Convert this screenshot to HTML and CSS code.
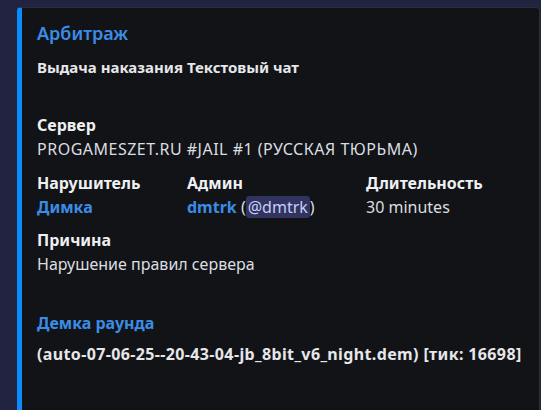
FILE: index.html
```html
<!DOCTYPE html>
<html lang="ru">
<head>
  <meta charset="UTF-8">
  <title>Арбитраж</title>
  <link rel="stylesheet" href="styles.css">
</head>
<body>

  <div class="embed">
    <div class="embed-title">Арбитраж</div>
    <div class="embed-desc">Выдача наказания Текстовый чат</div>

    <div class="fields">
      <div class="field full">
        <div class="field-name">Сервер</div>
        <div class="field-value caps">PROGAMESZET.RU #JAIL #1 (РУССКАЯ ТЮРЬМА)</div>
      </div>

      <div class="field inline">
        <div class="field-name">Нарушитель</div>
        <div class="field-value"><span class="link">Димка</span></div>
      </div>
      <div class="field inline">
        <div class="field-name">Админ</div>
        <div class="field-value"><span class="link">dmtrk</span> (<span class="mention">@dmtrk</span>)</div>
      </div>
      <div class="field inline">
        <div class="field-name">Длительность</div>
        <div class="field-value">30 minutes</div>
      </div>

      <div class="field full reason">
        <div class="field-name">Причина</div>
        <div class="field-value">Нарушение правил сервера</div>
      </div>

      <div class="field full demo">
        <div class="field-name link">Демка раунда</div>
        <div class="field-value strong">(auto-07-06-25--20-43-04-jb_8bit_v6_night.dem) [тик: 16698]</div>
      </div>
    </div>
  </div>

</body>
</html>
```

FILE: styles.css
```css
html, body {
  height: 100%;
  overflow: hidden;
}

body {
  margin: 0;
  padding: 7px 1px 0 17px;
  background: #212340;
  font-family: "Noto Sans", sans-serif;
  font-size: 16px;
  line-height: 23px;
  color: #dbdee1;
}

.embed {
  background: #121316;
  border: 1px solid #2c2e3a;
  border-left: 5px solid #0a8cff;
  border-radius: 4px 4px 0 0;
  min-height: 460px;
  padding: 10px 16px 16px 15px;
}

.embed-title {
  color: #3a8de6;
  font-size: 18px;
  font-weight: 600;
  line-height: 30px;
}

.embed-desc {
  margin-top: 8px;
  font-size: 15px;
  font-weight: 700;
  color: #e6e7ea;
}

.fields {
  display: grid;
  grid-template-columns: 150px 179px auto;
  margin-top: 35px;
}

.field.full {
  grid-column: 1 / -1;
}

.field.inline {
  margin-top: 11px;
}

.field.reason {
  margin-top: 10px;
}

.field-name {
  font-weight: 700;
  color: #eef0f2;
}

.field-value {
  margin-top: 1px;
}

.field-value.caps {
  letter-spacing: 0.5px;
}

.link {
  color: #3a8de6;
  font-weight: 700;
}

.strong {
  font-weight: 700;
  color: #e6e7ea;
  letter-spacing: 0.37px;
}

.mention {
  background: #30345f;
  color: #c9cdfb;
  border-radius: 3px;
  padding: 0 2px;
}

.demo {
  margin-top: 36px;
}

.demo .field-value {
  margin-top: 8px;
}
```
